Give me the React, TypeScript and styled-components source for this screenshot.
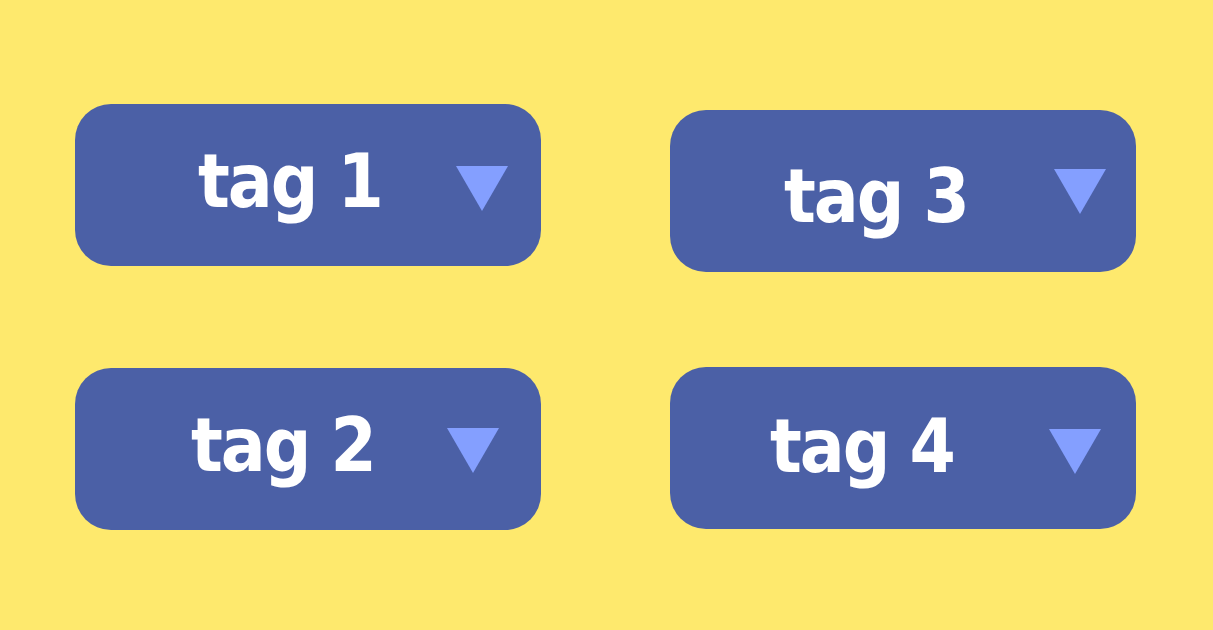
import styled, { createGlobalStyle } from 'styled-components';

const GlobalStyle = createGlobalStyle`
  html, body {
    margin: 0;
    padding: 0;
    background-color: #fee96d;
  }
  body {
    width: 1213px;
    height: 630px;
    overflow: hidden;
    font-family: 'DejaVu Sans', 'Liberation Sans', sans-serif;
  }
`;

interface ITag {
  label: string;
  textX: number;
  textY: number;
  arrowRight: number;
  arrowY: number;
}

const left: ITag[] = [
  { label: 'tag 1', textX: 123, textY: 40, arrowRight: 33, arrowY: 62 },
  { label: 'tag 2', textX: 116, textY: 40, arrowRight: 42, arrowY: 60 },
];

const right: ITag[] = [
  { label: 'tag 3', textX: 114, textY: 49, arrowRight: 30, arrowY: 59 },
  { label: 'tag 4', textX: 100, textY: 42, arrowRight: 35, arrowY: 62 },
];

const Arrow = () => (
  <svg width='52' height='45' viewBox='0 0 52 45'>
    <polygon points='0,0 52,0 26,45' fill='#849fff' />
  </svg>
);

const Tag = ({ label, textX, textY, arrowRight, arrowY }: ITag) => (
  <TagButton>
    <Label $x={textX} $y={textY}>
      {label}
    </Label>
    <ArrowBox $right={arrowRight} $y={arrowY}>
      <Arrow />
    </ArrowBox>
  </TagButton>
);

const App = () => {
  return (
    <Page>
      <GlobalStyle />
      <Column $top={104} $gap={102}>
        {left.map((t) => (
          <Tag key={t.label} {...t} />
        ))}
      </Column>
      <Column $top={110} $gap={95}>
        {right.map((t) => (
          <Tag key={t.label} {...t} />
        ))}
      </Column>
    </Page>
  );
};

export default App;

const Page = styled.div`
  display: flex;
  gap: 129px;
  padding-left: 75px;
`;

const Column = styled.div<{ $top: number; $gap: number }>`
  display: flex;
  flex-direction: column;
  padding-top: ${(p) => p.$top}px;
  gap: ${(p) => p.$gap}px;
`;

const TagButton = styled.div`
  display: flex;
  align-items: flex-start;
  width: 466px;
  height: 162px;
  box-sizing: border-box;
  background-color: #4b60a6;
  border-radius: 36px;
  cursor: pointer;
`;

const Label = styled.span<{ $x: number; $y: number }>`
  margin-left: ${(p) => p.$x}px;
  margin-top: ${(p) => p.$y}px;
  color: #ffffff;
  font-size: 74px;
  font-weight: 700;
  font-stretch: condensed;
  letter-spacing: -2px;
  line-height: 1;
  white-space: nowrap;
`;

const ArrowBox = styled.span<{ $right: number; $y: number }>`
  display: flex;
  margin-left: auto;
  margin-right: ${(p) => p.$right}px;
  margin-top: ${(p) => p.$y}px;
`;
